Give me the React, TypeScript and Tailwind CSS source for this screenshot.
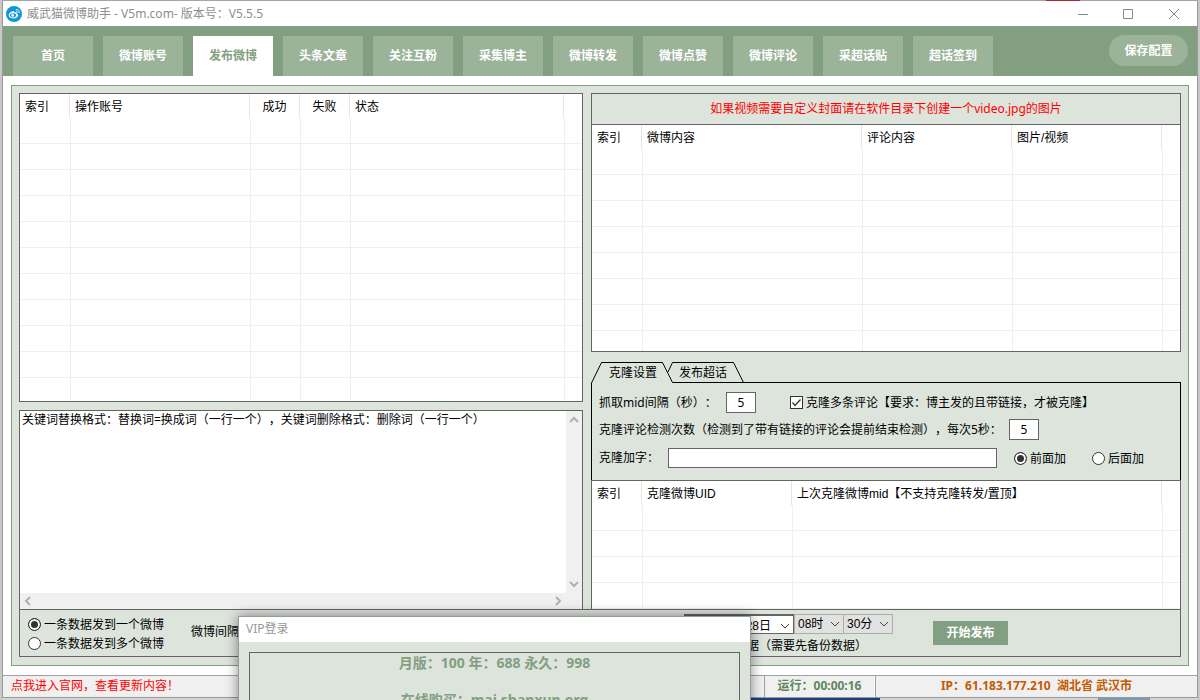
import { ReactNode } from "react";

const tabs = ["首页", "微博账号", "发布微博", "头条文章", "关注互粉", "采集博主", "微博转发", "微博点赞", "微博评论", "采超话贴", "超话签到"];
const activeTab = "发布微博";

type Column = { title: string; width: string; center?: boolean };

const accountColumns: Column[] = [
  { title: "索引", width: "w-[50px]" },
  { title: "操作账号", width: "w-[180px]" },
  { title: "成功", width: "w-[50px]", center: true },
  { title: "失败", width: "w-[50px]", center: true },
  { title: "状态", width: "w-[214px]" },
];

const contentColumns: Column[] = [
  { title: "索引", width: "w-[50px]" },
  { title: "微博内容", width: "w-[220px]" },
  { title: "评论内容", width: "w-[150px]" },
  { title: "图片/视频", width: "w-[150px]" },
];

const cloneColumns: Column[] = [
  { title: "索引", width: "w-[50px]" },
  { title: "克隆微博UID", width: "w-[150px]" },
  { title: "上次克隆微博mid【不支持克隆转发/置顶】", width: "w-[370px]" },
];

function ListView({ columns, rows, label }: { columns: Column[]; rows: number; label: string }) {
  return (
    <table aria-label={label} className="w-full table-fixed border-separate border-spacing-0 bg-white font-['Liberation_Sans','Noto_Sans_CJK_SC',sans-serif]">
      <thead>
        <tr className="h-6">
          {columns.map((c) => (
            <th key={c.title} className={`${c.width} border-r border-[#e5e5e5] px-[5px] pt-0.5 pb-0 font-normal whitespace-nowrap ${c.center ? "text-center" : "text-left"}`}>
              {c.title}
            </th>
          ))}
          <th className="p-0" />
        </tr>
      </thead>
      <tbody>
        {Array.from({ length: rows }, (_, r) => (
          <tr key={r} className="h-[26px]">
            {columns.map((c, i) => (
              <td key={c.title} className={`border-b border-[#efefef] p-0 ${i > 0 ? "border-l" : ""}`} />
            ))}
            <td className="border-b border-l border-[#efefef] p-0" />
          </tr>
        ))}
      </tbody>
    </table>
  );
}

function Chevron({ className, d }: { className: string; d: string }) {
  return (
    <svg viewBox="0 0 10 10" className={`size-[10px] fill-none ${className}`}>
      <path d={d} />
    </svg>
  );
}

const UP = "M1 7 5 3 9 7";
const DOWN = "M1 3 5 7 9 3";
const LEFT = "M7 1 3 5 7 9";
const RIGHT = "M3 1 7 5 3 9";

function Radio({ name, checked, children }: { name: string; checked?: boolean; children: ReactNode }) {
  return (
    <label className="flex items-center gap-[3px] whitespace-nowrap">
      <input
        type="radio"
        name={name}
        defaultChecked={checked}
        className="size-[13px] appearance-none rounded-full border border-[#333] bg-white checked:bg-[#333] checked:shadow-[inset_0_0_0_2px_#fff]"
      />
      {children}
    </label>
  );
}

function TimeSelect({ value, label }: { value: string; label: string }) {
  return (
    <div className="relative h-5 w-[50px]">
      <select aria-label={label} className="h-5 w-full appearance-none border border-[#adadad] bg-[#e1e1e1] pl-[3px] font-['Liberation_Sans','Noto_Sans_CJK_SC',sans-serif]">
        <option>{value}</option>
      </select>
      <Chevron d={DOWN} className="pointer-events-none absolute top-[5px] right-1 stroke-[#444]" />
    </div>
  );
}

function Logo() {
  return (
    <svg viewBox="0 0 16 16" className="size-4">
      <circle cx="8" cy="8" r="8" fill="#1296db" />
      <path d="M7 5.2c-2.3.5-4.3 2.2-4.3 4.1 0 1.8 2 3.1 4.5 3.1 2.8 0 4.900-1.500 4.900-3.200 0-1-.7-1.500-1.500-1.700.4-1.200-.6-1.700-2.100-1 .1-1-.4-1.500-1.500-1.300z" fill="#fff" />
      <ellipse cx="7" cy="9.3" rx="3" ry="2.1" fill="#1296db" />
      <circle cx="6.7" cy="9.4" r="1.3" fill="#fff" />
      <path d="M9.8 3.6c2.3-.5 3.9 1.3 3.3 3.4M10 5.4c1-.2 1.6.4 1.4 1.3" fill="none" stroke="#fff" strokeWidth=".9" />
    </svg>
  );
}

function TitleBar() {
  return (
    <header className="flex h-[25px] shrink-0 items-center bg-white text-[#8e8e8e]">
      <div className="flex items-center gap-[5px] pl-[3px]">
        <Logo />
        <h1>威武猫微博助手 - V5m.com- 版本号：V5.5.5</h1>
      </div>
      <div className="ml-auto flex">
        <button aria-label="最小化" className="flex h-6 w-[46px] items-center justify-center">
          <svg viewBox="0 0 10 10" className="size-[10px] stroke-[#888]"><path d="M0 5.5h10" /></svg>
        </button>
        <button aria-label="最大化" className="flex h-6 w-[44px] items-center justify-center">
          <svg viewBox="0 0 10 10" className="size-[10px] fill-none stroke-[#888]"><path d="M.5.5h9v9h-9z" /></svg>
        </button>
        <button aria-label="关闭" className="flex h-6 w-[47px] items-center justify-center">
          <svg viewBox="0 0 10 10" className="size-[10px] stroke-[#888]"><path d="M0 0 10 10M10 0 0 10" /></svg>
        </button>
      </div>
    </header>
  );
}

function Toolbar() {
  return (
    <nav className="flex h-[50px] shrink-0 items-end gap-[10px] bg-[#82a081] pr-[9px] pl-[10px] font-bold text-white">
      {tabs.map((t) => (
        <button key={t} className={`h-10 w-20 ${t === activeTab ? "bg-white text-[#82a081]" : "bg-[#9ab399]"}`}>
          {t}
        </button>
      ))}
      <button className="mb-[10px] ml-auto h-[31px] w-[79px] rounded-full bg-[#9ab399]">保存配置</button>
    </nav>
  );
}

function CloneSettings() {
  return (
    <section>
      <div className="relative h-[21px]">
        <svg viewBox="0 0 590 21" preserveAspectRatio="xMinYMin slice" className="absolute inset-0 h-[21px] w-full fill-none stroke-black">
          <path d="M.5 21 10.5.5H71.5L81.5 20.5H2000M77 10 81.5.5H142.5L152.5 20.5" />
        </svg>
        <div role="tablist" className="relative flex h-[21px] items-center pt-px pl-[18px]">
          <button role="tab" aria-selected="true" className="w-[70px] text-left">克隆设置</button>
          <button role="tab" aria-selected="false" className="text-left">发布超话</button>
        </div>
      </div>
      <div className="border-x border-black px-[7px] pt-[6px] pb-2">
        <div className="flex h-[27px] items-center">
          <label htmlFor="grab" className="w-[127px]">抓取mid间隔（秒）：</label>
          <input id="grab" defaultValue="5" className="h-[21px] w-[30px] border border-[#646464] bg-white text-center" />
          <label className="ml-[34px] flex items-center gap-[3px]">
            <span className="relative flex size-[13px]">
              <input type="checkbox" defaultChecked className="size-[13px] appearance-none border border-[#333] bg-white" />
              <svg viewBox="0 0 13 13" className="pointer-events-none absolute inset-0 fill-none stroke-[#333]" strokeWidth="1.3"><path d="M2.5 6.5 5 9.5 10.5 3.5" /></svg>
            </span>
            克隆多条评论【要求：博主发的且带链接，才被克隆】
          </label>
        </div>
        <div className="flex h-[27px] items-center">
          <label htmlFor="times" className="w-[410px] whitespace-nowrap">克隆评论检测次数（检测到了带有链接的评论会提前结束检测），每次5秒：</label>
          <input id="times" defaultValue="5" className="h-[21px] w-[30px] border border-[#646464] bg-white text-center" />
        </div>
        <div className="flex h-[29px] items-center">
          <label htmlFor="suffix" className="w-[69px]">克隆加字：</label>
          <input id="suffix" className="h-5 w-[329px] border border-[#646464] bg-white px-1" />
          <div className="ml-[17px] flex gap-[26px] pt-0.5">
            <Radio name="place" checked>前面加</Radio>
            <Radio name="place">后面加</Radio>
          </div>
        </div>
      </div>
    </section>
  );
}

function KeywordBox() {
  return (
    <div className="grid min-h-0 flex-[199] basis-0 grid-cols-[1fr_16px] grid-rows-[1fr_16px] border border-b-0 border-[#646464] bg-[#f0f0f0]">
      <textarea
        aria-label="关键词"
        className="resize-none overflow-hidden bg-white px-[2px] py-0 leading-[18px] outline-none"
        defaultValue="关键词替换格式：替换词=换成词（一行一个），关键词删除格式：删除词（一行一个）"
      />
      <div className="flex flex-col items-center justify-between py-1">
        <Chevron d={UP} className="stroke-[#b0b0b0] stroke-2" />
        <Chevron d={DOWN} className="stroke-[#b0b0b0] stroke-2" />
      </div>
      <div className="flex items-center justify-between px-[3px]">
        <Chevron d={LEFT} className="stroke-[#b0b0b0] stroke-2" />
        <Chevron d={RIGHT} className="stroke-[#b0b0b0] stroke-2" />
      </div>
    </div>
  );
}

function PublishBar() {
  return (
    <section className="flex h-[48px] shrink-0 border border-[#646464] pl-2">
      <div className="flex w-[163px] flex-col justify-center gap-px pt-0.5">
        <Radio name="mode" checked>一条数据发到一个微博</Radio>
        <Radio name="mode">一条数据发到多个微博</Radio>
      </div>
      <span className="w-[493px] pt-[13px]">微博间隔</span>
      <div className="flex flex-col">
        <div className="flex pt-1">
          <div className="relative h-5 w-[110px]">
            <input aria-label="日期" defaultValue="28日" className="h-5 w-full border border-t-2 border-[#646464] bg-white pr-[22px] text-right font-['Liberation_Sans','Noto_Sans_CJK_SC',sans-serif]" />
            <Chevron d={DOWN} className="pointer-events-none absolute top-[7px] right-1 stroke-[#444]" />
          </div>
          <div className="flex -space-x-px">
            <TimeSelect value="08时" label="时" />
            <TimeSelect value="30分" label="分" />
          </div>
        </div>
        <span className="pt-[3px] pl-[63px]">据（需要先备份数据）</span>
      </div>
      <button className="mt-[11px] ml-10 h-6 w-[75px] bg-[#82a081] font-bold text-white">开始发布</button>
    </section>
  );
}

function StatusBar() {
  return (
    <footer className="flex h-[22px] shrink-0 items-stretch border-t border-[#a0a0a0] bg-[#f0f0f0] leading-5">
      <a href="#update" className="flex-1 pl-2 text-[#f00]">点我进入官网，查看更新内容！</a>
      <span className="w-[111px] border-r border-l border-r-white border-l-[#a0a0a0] text-center font-bold text-[#5f865e]">运行：00:00:16</span>
      <span className="w-[322px] border-l border-[#a0a0a0] text-center font-bold whitespace-pre text-[#c55a00]">IP：61.183.177.210  湖北省 武汉市</span>
    </footer>
  );
}

function VipDialog() {
  return (
    <div role="dialog" aria-label="VIP登录" className="absolute top-[616px] left-[238px] flex h-[180px] w-[513px] flex-col border border-[#999] bg-[#dde4dc] shadow-[0_0_12px_rgba(0,0,0,0.45)]">
      <h2 className="h-[25px] bg-white pl-[7px] leading-6 text-[#999]">VIP登录</h2>
      <div className="mx-[10px] mt-[10px] flex-1 border border-[#646464] text-center text-[14px] leading-5 font-bold text-[#82a081]">
        <p>月版：100 年：688 永久：998</p>
        <p className="mt-[17px]">在线购买：mai.shanxun.org</p>
      </div>
    </div>
  );
}

export default function App() {
  return (
    <div className="relative flex h-screen flex-col overflow-hidden bg-[#c8c8c8] px-[2px] font-['Noto_Sans','Noto_Sans_CJK_SC',sans-serif] text-[12px] leading-[18px] text-black [text-spacing-trim:space-all]">
      {/* desktop showing above the window */}
      <div className="flex h-px shrink-0 justify-end bg-[#a5a5a5] pr-[118px]">
        <div className="w-[34px] bg-[#b0282e]" />
      </div>
      <div className="flex min-h-0 flex-1 flex-col border-x border-b border-[#999] bg-white">
        <TitleBar />
        <Toolbar />
        <main className="mx-2 mt-[9px] mb-[9px] flex min-h-0 flex-1 flex-col border border-[#82a081] bg-[#dde4dc] px-[7px] pt-[7px] pb-2">
          <div className="grid min-h-0 flex-1 grid-cols-[564fr_590fr] gap-x-2">
            <div className="flex min-h-0 flex-col">
              <div className="mb-2 min-h-0 flex-[309] basis-0 overflow-hidden border border-[#646464] bg-white">
                <ListView columns={accountColumns} rows={11} label="账号列表" />
              </div>
              <KeywordBox />
            </div>
            <div className="flex min-h-0 flex-col">
              <p className="h-[31px] shrink-0 border border-b-0 border-[#646464] text-center leading-[29px] text-[#f00]">
                如果视频需要自定义封面请在软件目录下创建一个video.jpg的图片
              </p>
              <div className="mb-[10px] min-h-0 flex-[228] basis-0 overflow-hidden border border-[#646464] bg-white">
                <ListView columns={contentColumns} rows={8} label="微博列表" />
              </div>
              <CloneSettings />
              <div className="min-h-0 flex-[129] basis-0 overflow-hidden border border-b-0 border-[#646464] bg-white">
                <ListView columns={cloneColumns} rows={4} label="克隆列表" />
              </div>
            </div>
          </div>
          <PublishBar />
        </main>
        <StatusBar />
      </div>
      {/* desktop showing below the window */}
      <div className="flex h-[2px] shrink-0 justify-end bg-[#d4d4d4] pr-12">
        <div className="mr-[218px] w-[129px] bg-[#1f3f7f]" />
        <div className="w-[52px] bg-[#8099b3]" />
      </div>
      <VipDialog />
    </div>
  );
}
